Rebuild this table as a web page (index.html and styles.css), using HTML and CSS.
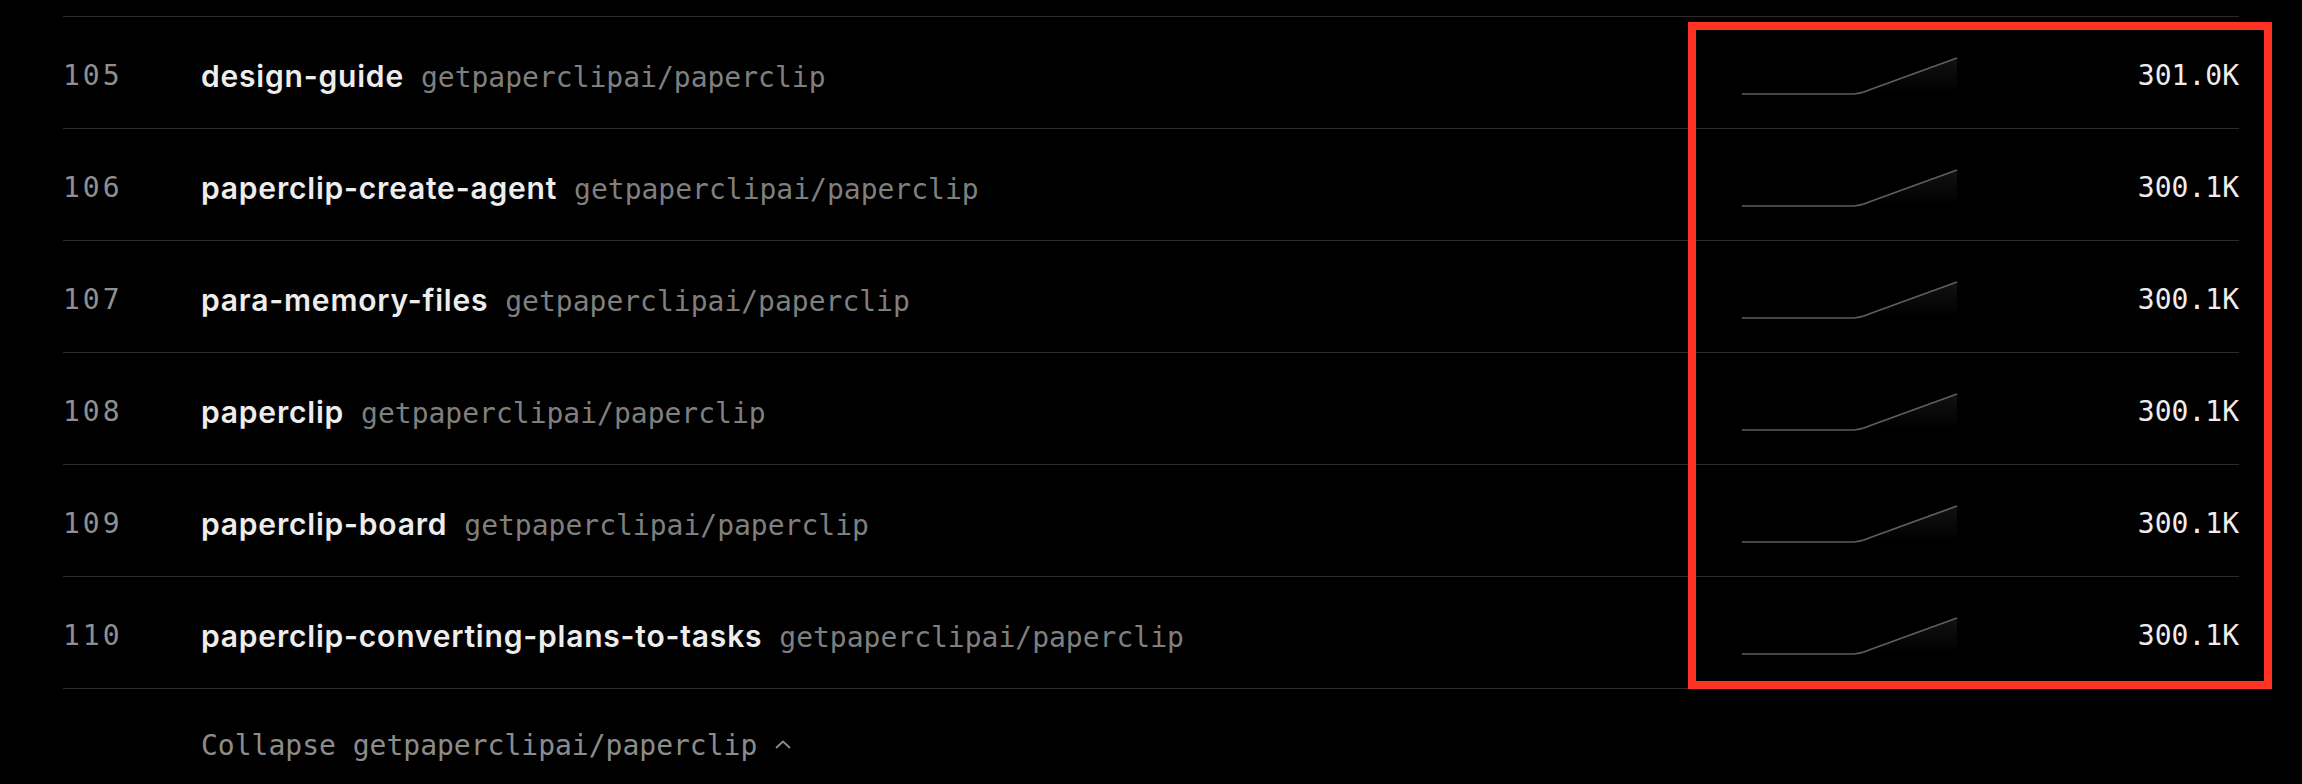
FILE: index.html
```html
<!DOCTYPE html>
<html lang="en">
<head>
<meta charset="utf-8">
<title>Skills leaderboard</title>
<link rel="stylesheet" href="styles.css">
</head>
<body>
<main class="board">
  <ul class="list">
    <li class="row">
      <span class="rank">105</span>
      <span class="skill"><span class="name">design-guide</span><span class="repo">getpaperclipai/paperclip</span></span>
      <svg class="spark" viewBox="0 0 216 40" width="216" height="40"><defs><linearGradient id="g1" x1="0" y1="0" x2="0" y2="1"><stop offset="0" stop-color="#fff" stop-opacity="0.07"/><stop offset="1" stop-color="#fff" stop-opacity="0"/></linearGradient></defs><path class="area" d="M0 38 L110 38 C118 38 121 36.5 127 34 L215 2 L215 38 Z"/><path class="line" d="M0 38 L110 38 C118 38 121 36.5 127 34 L215 2"/></svg>
      <span class="value">301.0K</span>
    </li>
    <li class="row">
      <span class="rank">106</span>
      <span class="skill"><span class="name">paperclip-create-agent</span><span class="repo">getpaperclipai/paperclip</span></span>
      <svg class="spark" viewBox="0 0 216 40" width="216" height="40"><path class="area" d="M0 38 L110 38 C118 38 121 36.5 127 34 L215 2 L215 38 Z"/><path class="line" d="M0 38 L110 38 C118 38 121 36.5 127 34 L215 2"/></svg>
      <span class="value">300.1K</span>
    </li>
    <li class="row">
      <span class="rank">107</span>
      <span class="skill"><span class="name">para-memory-files</span><span class="repo">getpaperclipai/paperclip</span></span>
      <svg class="spark" viewBox="0 0 216 40" width="216" height="40"><path class="area" d="M0 38 L110 38 C118 38 121 36.5 127 34 L215 2 L215 38 Z"/><path class="line" d="M0 38 L110 38 C118 38 121 36.5 127 34 L215 2"/></svg>
      <span class="value">300.1K</span>
    </li>
    <li class="row">
      <span class="rank">108</span>
      <span class="skill"><span class="name">paperclip</span><span class="repo">getpaperclipai/paperclip</span></span>
      <svg class="spark" viewBox="0 0 216 40" width="216" height="40"><path class="area" d="M0 38 L110 38 C118 38 121 36.5 127 34 L215 2 L215 38 Z"/><path class="line" d="M0 38 L110 38 C118 38 121 36.5 127 34 L215 2"/></svg>
      <span class="value">300.1K</span>
    </li>
    <li class="row">
      <span class="rank">109</span>
      <span class="skill"><span class="name">paperclip-board</span><span class="repo">getpaperclipai/paperclip</span></span>
      <svg class="spark" viewBox="0 0 216 40" width="216" height="40"><path class="area" d="M0 38 L110 38 C118 38 121 36.5 127 34 L215 2 L215 38 Z"/><path class="line" d="M0 38 L110 38 C118 38 121 36.5 127 34 L215 2"/></svg>
      <span class="value">300.1K</span>
    </li>
    <li class="row">
      <span class="rank">110</span>
      <span class="skill"><span class="name">paperclip-converting-plans-to-tasks</span><span class="repo">getpaperclipai/paperclip</span></span>
      <svg class="spark" viewBox="0 0 216 40" width="216" height="40"><path class="area" d="M0 38 L110 38 C118 38 121 36.5 127 34 L215 2 L215 38 Z"/><path class="line" d="M0 38 L110 38 C118 38 121 36.5 127 34 L215 2"/></svg>
      <span class="value">300.1K</span>
    </li>
  </ul>
  <button class="collapse" type="button">Collapse getpaperclipai/paperclip<svg class="caret" viewBox="0 0 16 16" width="16" height="16"><polyline points="1.5,10.5 8,4.5 14.5,10.5"/></svg></button>
</main>
<div class="highlight"></div>
</body>
</html>
```

FILE: styles.css
```css
html, body {
  margin: 0;
  padding: 0;
  background: #000;
}

body {
  width: 2302px;
  height: 784px;
  overflow: hidden;
  position: relative;
  font-family: "Inter", "Liberation Sans", sans-serif;
  color: #ededed;
}

.board {
  padding: 16px 63px 0 63px;
}

.list {
  list-style: none;
  margin: 0;
  padding: 0;
  border-bottom: 1px solid #2b2b2b;
}

.row {
  display: grid;
  grid-template-columns: 138px 1fr 216px 281px;
  align-items: center;
  box-sizing: border-box;
  height: 112px;
  padding-top: 6px;
  border-top: 1px solid #2b2b2b;
}

.rank {
  font-family: "DejaVu Sans Mono", "Liberation Mono", monospace;
  font-size: 28px;
  letter-spacing: 3px;
  color: #8f8f8f;
}

.skill {
  display: flex;
  align-items: baseline;
  gap: 17px;
  white-space: nowrap;
}

.name {
  font-family: "Inter", "Liberation Sans", sans-serif;
  font-weight: 600;
  font-size: 30px;
  letter-spacing: 0.8px;
  color: #ededed;
}

.repo {
  font-family: "DejaVu Sans Mono", "Liberation Mono", monospace;
  font-size: 28px;
  color: #7f7f7f;
}

.spark {
  display: block;
  overflow: visible;
}

.spark .line {
  fill: none;
  stroke: #5e5e5e;
  stroke-width: 1.7;
}

.spark .area {
  fill: url(#g1);
}

.value {
  justify-self: end;
  font-family: "DejaVu Sans Mono", "Liberation Mono", monospace;
  font-size: 28px;
  color: #ededed;
}

.collapse {
  display: flex;
  align-items: center;
  height: 112px;
  margin: 0;
  padding: 0 0 0 138px;
  border: 0;
  background: none;
  font-family: "DejaVu Sans Mono", "Liberation Mono", monospace;
  font-size: 28px;
  color: #8c8c8c;
  cursor: pointer;
}

.caret {
  margin-left: 18px;
  fill: none;
  stroke: #8c8c8c;
  stroke-width: 1.8;
  stroke-linecap: round;
  stroke-linejoin: round;
}

.highlight {
  position: absolute;
  left: 1688px;
  top: 22px;
  width: 584px;
  height: 667px;
  box-sizing: border-box;
  border: 8px solid #ff3322;
  pointer-events: none;
}
```
